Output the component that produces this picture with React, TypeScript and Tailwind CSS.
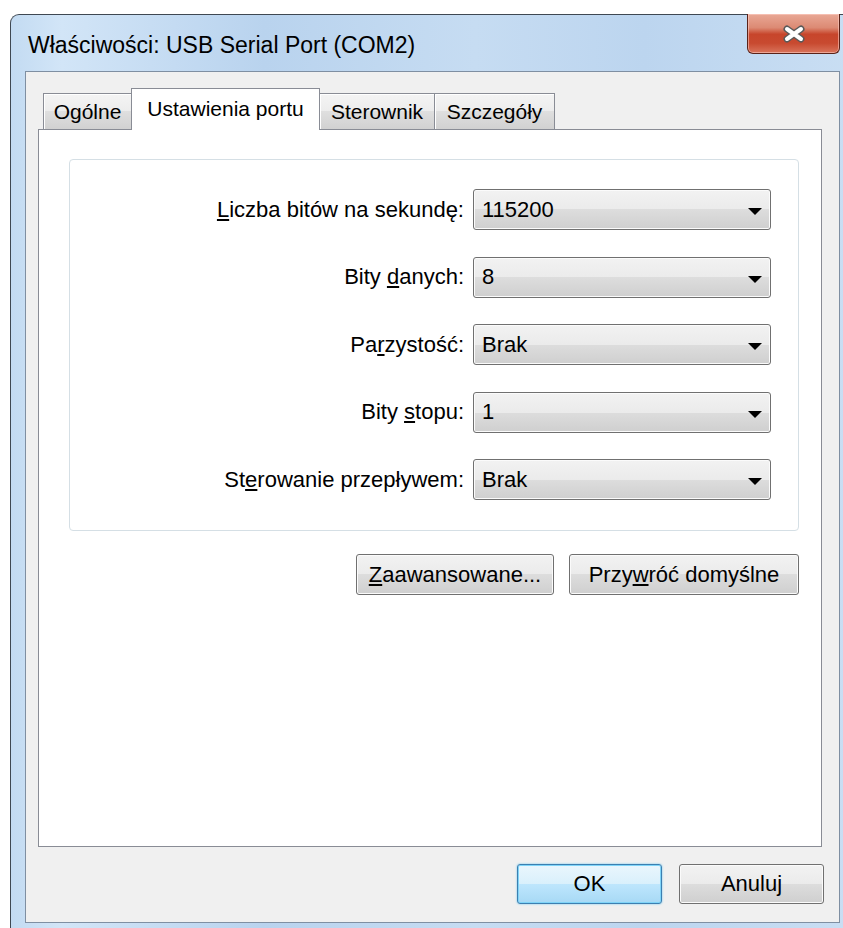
import React from "react";

const font = "font-['Liberation_Sans',Arial,sans-serif]";

const btnFace =
  "bg-[linear-gradient(to_bottom,#f2f2f2_0%,#ebebeb_50%,#dddddd_50%,#cfcfcf_100%)] border border-[#707070] rounded-[3px] shadow-[inset_0_0_0_1px_#fbfbfb]";

function Combo({ value }: { value: string }) {
  return (
    <div className={`relative w-[298px] h-[41px] ${btnFace} flex items-center pl-[8px]`}>
      <span className="text-[22px] text-black leading-none">{value}</span>
      <svg className="absolute right-[8px] top-[18px]" width="14" height="7" viewBox="0 0 14 7">
        <polygon points="0,0 14,0 7,7" fill="#000" />
      </svg>
    </div>
  );
}

function Row({ label, value }: { label: React.ReactNode; value: string }) {
  return (
    <div className="flex items-center gap-[9px]">
      <span className="text-[22px] text-black leading-none">{label}</span>
      <Combo value={value} />
    </div>
  );
}

function Btn({ children, w }: { children: React.ReactNode; w: string }) {
  return (
    <div className={`${w} h-[41px] ${btnFace} flex items-center justify-center text-[22px] text-black leading-none`}>
      {children}
    </div>
  );
}

function Tab({ children, w, active }: { children: React.ReactNode; w: string; active?: boolean }) {
  if (active) {
    return (
      <div
        className={`${w} h-[42px] -ml-[1px] bg-white border border-b-0 border-[#898c95] flex items-center justify-center text-[21px] text-black leading-none relative z-20 pb-[2px]`}
      >
        {children}
      </div>
    );
  }
  return (
    <div
      className={`${w} h-[36px] mb-[1px] -ml-[1px] first:ml-0 bg-[linear-gradient(to_bottom,#f4f4f4_0%,#ececec_50%,#dfdfdf_50%,#d1d1d1_100%)] border border-b-0 border-[#898c95] shadow-[inset_0_1px_0_#fff,inset_1px_0_0_#fff] flex items-center justify-center text-[21px] text-black leading-none`}
    >
      {children}
    </div>
  );
}

export default function App() {
  return (
    <div className={`w-[843px] h-[928px] bg-white overflow-hidden pt-[14px] pl-[10px] ${font}`}>
      {/* window frame */}
      <div className="relative w-[845px] h-[930px] rounded-tl-[9px] border-t border-l border-[#3f4852] bg-[linear-gradient(to_right,#c3dbf2_0%,#d2e5f7_6%,#b9d3ee_30%,#c6dcf2_55%,#bcd5ef_75%,#c9def3_100%)]">
        {/* title bar */}
        <div className="relative h-[56px] flex items-center pl-[17px] pt-[4px]">
          <span className="text-[23px] text-black leading-none">Właściwości: USB Serial Port (COM2)</span>
          <div className="absolute left-[736px] -top-[1px] w-[93px] h-[40px] rounded-b-[6px] border border-t-0 border-[#5a2218] bg-[linear-gradient(to_bottom,#e9a896_0%,#dc8a74_35%,#c7452b_52%,#c84a30_75%,#d9745c_100%)] shadow-[inset_0_0_0_1px_rgba(255,210,200,0.55)] flex items-center justify-center">
            <svg width="24" height="18" viewBox="0 0 24 18">
              <path d="M5 4 L19 14 M19 4 L5 14" stroke="#5a5a5a" strokeWidth="7" strokeLinecap="round" />
              <path d="M5 4 L19 14 M19 4 L5 14" stroke="#ffffff" strokeWidth="4" strokeLinecap="round" />
            </svg>
          </div>
        </div>

        {/* client area */}
        <div className="ml-[14px] w-[815px] h-[852px] border border-[#7f8fa2] bg-[#f0f0f0] pt-[16px] pl-[12px]">
          {/* tabs */}
          <div className="relative z-10 flex items-end h-[42px] pl-[5px]">
            <Tab w="w-[89px]">Ogólne</Tab>
            <Tab w="w-[189px]" active>
              Ustawienia portu
            </Tab>
            <Tab w="w-[116px]">Sterownik</Tab>
            <Tab w="w-[121px]">Szczegóły</Tab>
          </div>

          {/* tab page */}
          <div className="-mt-[1px] w-[784px] h-[718px] border border-[#898c95] bg-white">
            <div className="ml-[30px] mt-[29px] w-[730px] h-[372px] border border-[#d5dfe5] rounded-[4px] pt-[29px] pr-[27px] flex flex-col items-end gap-[26.5px]">
              <Row
                label={
                  <>
                    <span className="underline">L</span>iczba bitów na sekundę:
                  </>
                }
                value="115200"
              />
              <Row
                label={
                  <>
                    Bity <span className="underline">d</span>anych:
                  </>
                }
                value="8"
              />
              <Row
                label={
                  <>
                    Pa<span className="underline">r</span>zystość:
                  </>
                }
                value="Brak"
              />
              <Row
                label={
                  <>
                    Bity <span className="underline">s</span>topu:
                  </>
                }
                value="1"
              />
              <Row
                label={
                  <>
                    St<span className="underline">e</span>rowanie przepływem:
                  </>
                }
                value="Brak"
              />
            </div>

            <div className="ml-[30px] mt-[23px] w-[730px] flex justify-end gap-[15px]">
              <Btn w="w-[198px]">
                <span>
                  <span className="underline">Z</span>aawansowane...
                </span>
              </Btn>
              <Btn w="w-[230px]">
                <span>
                  Przy<span className="underline">w</span>róć domyślne
                </span>
              </Btn>
            </div>
          </div>

          {/* dialog buttons */}
          <div className="mt-[17px] flex justify-end gap-[17px] pr-[15px]">
            <div className="w-[145px] h-[40px] rounded-[3px] border border-[#3c7fb1] bg-[linear-gradient(to_bottom,#eaf6fd_0%,#d9f0fc_50%,#bee6fd_50%,#a7d9f5_100%)] shadow-[inset_0_0_0_1px_#7fd4f8,0_0_2px_#5bc3f0] flex items-center justify-center text-[22px] text-black leading-none">
              OK
            </div>
            <div className={`w-[145px] h-[40px] ${btnFace} flex items-center justify-center text-[22px] text-black leading-none`}>
              Anuluj
            </div>
          </div>
        </div>
      </div>
    </div>
  );
}
